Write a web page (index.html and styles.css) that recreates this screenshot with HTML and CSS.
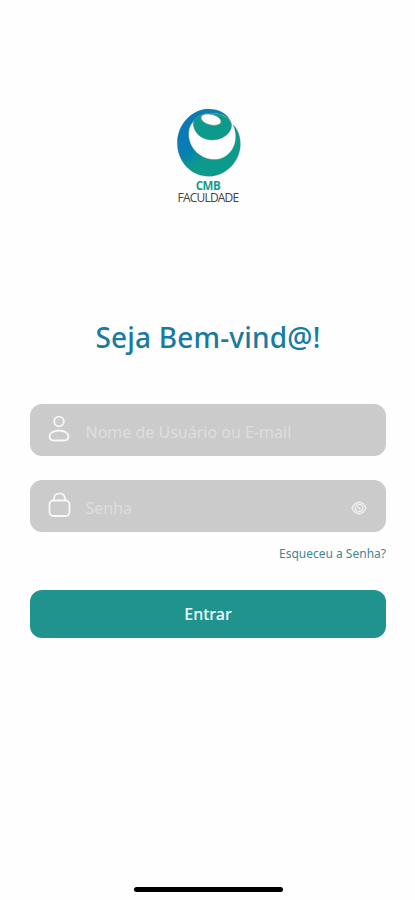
FILE: index.html
```html
<!DOCTYPE html>
<html lang="pt-BR">
<head>
<meta charset="utf-8">
<meta name="viewport" content="width=device-width, initial-scale=1">
<title>CMB Faculdade</title>
<link rel="stylesheet" href="styles.css">
</head>
<body>
<main class="screen">
  <header class="brand">
    <svg class="brand-mark" viewBox="33 24 198 210" aria-hidden="true">
      <defs>
        <linearGradient id="ring" x1="50" y1="80" x2="125" y2="200" gradientUnits="userSpaceOnUse">
          <stop offset="0" stop-color="#0879b8"/>
          <stop offset=".5" stop-color="#087eb2"/>
          <stop offset=".85" stop-color="#0b9a8c"/>
        </linearGradient>
        <linearGradient id="arc" x1="60" y1="0" x2="200" y2="0" gradientUnits="userSpaceOnUse">
          <stop offset="0" stop-color="#0879b8"/>
          <stop offset=".6" stop-color="#087eb2"/>
          <stop offset="1" stop-color="#0b8f9a"/>
        </linearGradient>
      </defs>
      <path class="brand-ring" fill="url(#ring)" d="M130 27C79 29 38 73 37 127C36 184 78 229 130 229C181 229 223 187 226 137C227 110 218 87 204 74C218 101 214 137 194 158C172 182 136 186 106 166C74 145 62 105 78 71L90 50Z"/>
      <path fill="url(#arc)" d="M66 90C50 60 90 28 130 27C158 26 187 38 199 66C187 48 168 42 147 40C118 38 94 48 84 66Z"/>
      <path class="brand-teal" d="M86 62C96 46 121 38 145 40C181 43 207 62 198 86C190 110 154 127 122 117C97 109 81 85 86 62Z"/>
      <ellipse class="brand-hole" cx="138" cy="59" rx="31" ry="16" transform="rotate(14 138 59)"/>
    </svg>
    <span class="brand-name">CMB</span>
    <span class="brand-type">FACULDADE</span>
  </header>
  <h1 class="title">Seja Bem-vind@!</h1>
  <form class="login">
    <label class="field">
      <svg class="field-icon" viewBox="0 0 24 30" aria-hidden="true"><circle cx="12" cy="7.500" r="4.800"/><path d="M12 16.500C6.500 16.500 2.500 19 2.500 22.500C2.500 25.500 4.500 26.500 7.500 26.500H16.500C19.500 26.500 21.500 25.500 21.500 22.500C21.500 19 17.500 16.500 12 16.500Z"/></svg>
      <input class="input input-user" type="text" placeholder="Nome de Usuário ou E-mail">
    </label>
    <label class="field">
      <svg class="field-icon" viewBox="0 0 24 30" aria-hidden="true"><rect x="2.500" y="10.500" width="20" height="15.500" rx="4"/><path d="M7 10.500V9C7 1.500 18 1.500 18 9V10.500"/></svg>
      <input class="input input-password" type="password" placeholder="Senha">
      <svg class="eye" viewBox="0 0 16 14" aria-hidden="true"><path d="M1 7C3 3 5.500 1.200 8 1.200S13 3 15 7C13 11 10.500 12.800 8 12.800S3 11 1 7Z"/><circle cx="8" cy="7" r="3.700"/><path d="M6.500 5.500L9.500 8.500"/></svg>
    </label>
    <a class="forgot" href="#">Esqueceu a Senha?</a>
    <button class="submit" type="button">Entrar</button>
  </form>
  <div class="home-indicator"></div>
</main>
</body>
</html>
```
FILE: styles.css
```css
* { box-sizing: border-box; }
body { margin: 0; background: #fefefe; font-family: "Noto Sans", sans-serif; }
.screen { height: 900px; padding: 108px 29px 0 30px; display: flex; flex-direction: column; overflow: hidden; }
.brand { height: 98px; display: flex; flex-direction: column; align-items: center; }
.brand-mark { width: 66px; height: 70px; margin-left: 1px; flex: none; overflow: visible; }
.brand-ring { stroke: #60827c; stroke-width: 1; }
.brand-teal { fill: #0b9a8c; stroke: #60827c; stroke-width: 1.500; }
.brand-hole { fill: #fefefe; stroke: #60827c; stroke-width: 1.500; }
.brand-name { font: 700 11.500px/12px "Open Sans", sans-serif; color: #159b91; letter-spacing: -.4px; margin-top: 2px; }
.brand-type { font: 400 12px/12px "Open Sans", sans-serif; color: #444; letter-spacing: -.8px; }
.title { margin: 111px 0 0; height: 40px; text-align: center; font-size: 28px; line-height: 40px; font-weight: 500; letter-spacing: .18px; color: #197b9e; white-space: nowrap; }
.login { margin-top: 47px; display: flex; flex-direction: column; }
.field { height: 52px; margin-bottom: 24px; padding: 0 19px 0 17px; border-radius: 12px; background: #cbcbcb; display: flex; align-items: center; }
.field-icon { width: 24px; height: 30px; margin-bottom: 3px; flex: none; fill: none; stroke: #f8f8f8; stroke-width: 1.800; }
.input { flex: 1; min-width: 0; margin: 4px 0 0 14.500px; padding: 0; border: 0; outline: 0; background: none; font: 400 16px/24px "Noto Sans", sans-serif; }
.input::placeholder { color: #dedede; opacity: 1; }
.eye { width: 16px; height: 14px; margin-top: 3px; flex: none; fill: none; stroke: #f0f0f0; stroke-width: 1.400; }
.forgot { align-self: flex-end; margin-top: -11px; font-size: 12px; line-height: 18px; color: #3f8793; text-decoration: none; }
.submit { height: 48px; margin-top: 27px; border: 0; border-radius: 12px; background: #20938f; color: #f5ffff; font: 500 16px/24px "Noto Sans", sans-serif; }
.home-indicator { width: 149px; height: 5px; border-radius: 3px; background: #000; margin: auto auto 8px 104px; }
```
